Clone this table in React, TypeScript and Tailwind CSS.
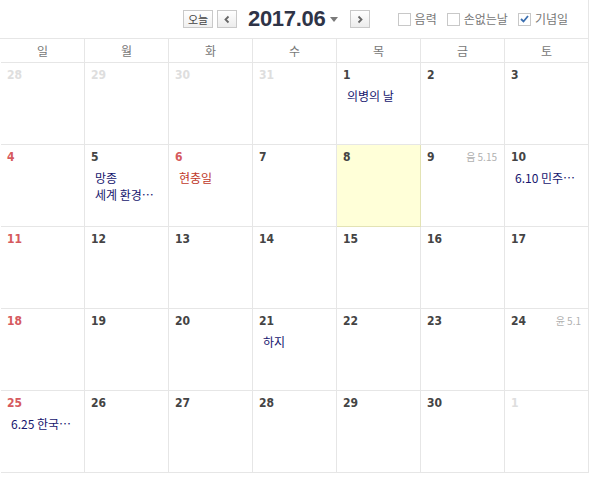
import React from 'react';

type Day = {
  d: number;
  muted?: boolean;
  lunar?: string;
  events?: string[];
  holiday?: string;
  today?: boolean;
};

const WEEKDAYS = ['일', '월', '화', '수', '목', '금', '토'];

const WEEKS: Day[][] = [
  [
    { d: 28, muted: true },
    { d: 29, muted: true },
    { d: 30, muted: true },
    { d: 31, muted: true },
    { d: 1, events: ['의병의 날'] },
    { d: 2 },
    { d: 3 },
  ],
  [
    { d: 4 },
    { d: 5, events: ['망종', '세계 환경⋯'] },
    { d: 6, holiday: '현충일' },
    { d: 7 },
    { d: 8, today: true },
    { d: 9, lunar: '음 5.15' },
    { d: 10, events: ['6.10 민주⋯'] },
  ],
  [{ d: 11 }, { d: 12 }, { d: 13 }, { d: 14 }, { d: 15 }, { d: 16 }, { d: 17 }],
  [
    { d: 18 },
    { d: 19 },
    { d: 20 },
    { d: 21, events: ['하지'] },
    { d: 22 },
    { d: 23 },
    { d: 24, lunar: '윤 5.1' },
  ],
  [
    { d: 25, events: ['6.25 한국⋯'] },
    { d: 26 },
    { d: 27 },
    { d: 28 },
    { d: 29 },
    { d: 30 },
    { d: 1, muted: true },
  ],
];

const KR = "font-['Noto_Sans_CJK_KR','Noto_Sans',sans-serif]";
const NUM = "font-['DejaVu_Sans_Condensed','DejaVu_Sans',sans-serif]";

function Chevron({ dir }: { dir: 'left' | 'right' }) {
  return (
    <svg width="8" height="9" viewBox="0 0 8 9">
      <polyline
        points={dir === 'left' ? '5.5,1.5 2.5,4.5 5.5,7.5' : '2.5,1.5 5.5,4.5 2.5,7.5'}
        fill="none"
        stroke="#666"
        strokeWidth="1.8"
      />
    </svg>
  );
}

function Check({ label, checked = false }: { label: string; checked?: boolean }) {
  return (
    <label className="flex items-center gap-[4px]">
      <span className="flex h-[13px] w-[13px] items-center justify-center border border-[#c8c8c8] bg-white">
        {checked && (
          <svg width="9" height="8" viewBox="0 0 9 8">
            <polyline points="1,4 3.5,6.5 8,1" fill="none" stroke="#3b6fb0" strokeWidth="1.8" />
          </svg>
        )}
      </span>
      <span className={`${KR} text-[12px] text-[#777]`}>{label}</span>
    </label>
  );
}

function Cell({ day, col }: { day: Day; col: number }) {
  let color = 'text-[#444]';
  if (day.muted) color = 'text-[#dedede]';
  else if (col === 0) color = 'text-[#d65a5e]';
  else if (day.holiday) color = 'text-[#d65a5e]';

  return (
    <div
      className={`h-[82px] border-r border-b ${
        day.today ? 'border-[#e3e3b4] bg-[#ffffd8]' : 'border-[#e6e6e6] bg-white'
      } px-[6px] pt-[5px]`}
    >
      <div className="flex items-start justify-between">
        <span className={`${NUM} text-[12px] leading-[14px] font-bold ${color}`}>{day.d}</span>
        {day.lunar && (
          <span className={`${KR} mr-[1px] text-[10px] leading-[14px] text-[#b0b0b0]`}>{day.lunar}</span>
        )}
      </div>
      <div className={`${KR} mt-[5px] pl-[4px] text-[12px] leading-[17px]`}>
        {day.holiday && <div className="text-[#c0392b]">{day.holiday}</div>}
        {day.events?.map((e) => (
          <div key={e} className="whitespace-nowrap text-[#16166e]">
            {e}
          </div>
        ))}
      </div>
    </div>
  );
}

export default function App() {
  return (
    <div className="h-[482px] w-[597px] bg-white">
      <div className="w-[589px]">
        {/* Toolbar */}
        <div className="flex h-[39px] items-center border-r border-b border-[#e6e6e6] pl-[183px] pr-[20px]">
          <button
            className={`${KR} flex h-[18px] w-[30px] items-center justify-center border border-[#c9c9c9] bg-gradient-to-b from-white to-[#f0f0f0] text-[11px] text-[#444]`}
          >
            오늘
          </button>
          <button className="ml-[4px] flex h-[18px] w-[20px] items-center justify-center border border-[#c9c9c9] bg-gradient-to-b from-white to-[#ececec]">
            <Chevron dir="left" />
          </button>
          <div className="ml-[11px] flex items-center">
            <span className="font-['Liberation_Sans',Arial,sans-serif] text-[22px] leading-none font-bold tracking-[-0.3px] text-[#2f3447]">
              2017.06
            </span>
            <svg className="ml-[5px]" width="8" height="5" viewBox="0 0 8 5">
              <polygon points="0,0 8,0 4,5" fill="#7a7a7a" />
            </svg>
          </div>
          <button className="ml-[12px] flex h-[18px] w-[20px] items-center justify-center border border-[#c9c9c9] bg-gradient-to-b from-white to-[#ececec]">
            <Chevron dir="right" />
          </button>
          <div className="ml-auto flex items-center gap-[10px]">
            <Check label="음력" />
            <Check label="손없는날" />
            <Check label="기념일" checked />
          </div>
        </div>

        {/* Weekday header */}
        <div className="grid grid-cols-7 pl-px">
          {WEEKDAYS.map((w) => (
            <div
              key={w}
              className={`${KR} flex h-[24px] items-center justify-center border-r border-b border-[#e6e6e6] text-[12px] text-[#777]`}
            >
              {w}
            </div>
          ))}
        </div>

        {/* Weeks */}
        <div className="grid grid-cols-7 pl-px">
          {WEEKS.map((week, wi) =>
            week.map((day, ci) => <Cell key={`${wi}-${ci}`} day={day} col={ci} />)
          )}
        </div>
      </div>
    </div>
  );
}
